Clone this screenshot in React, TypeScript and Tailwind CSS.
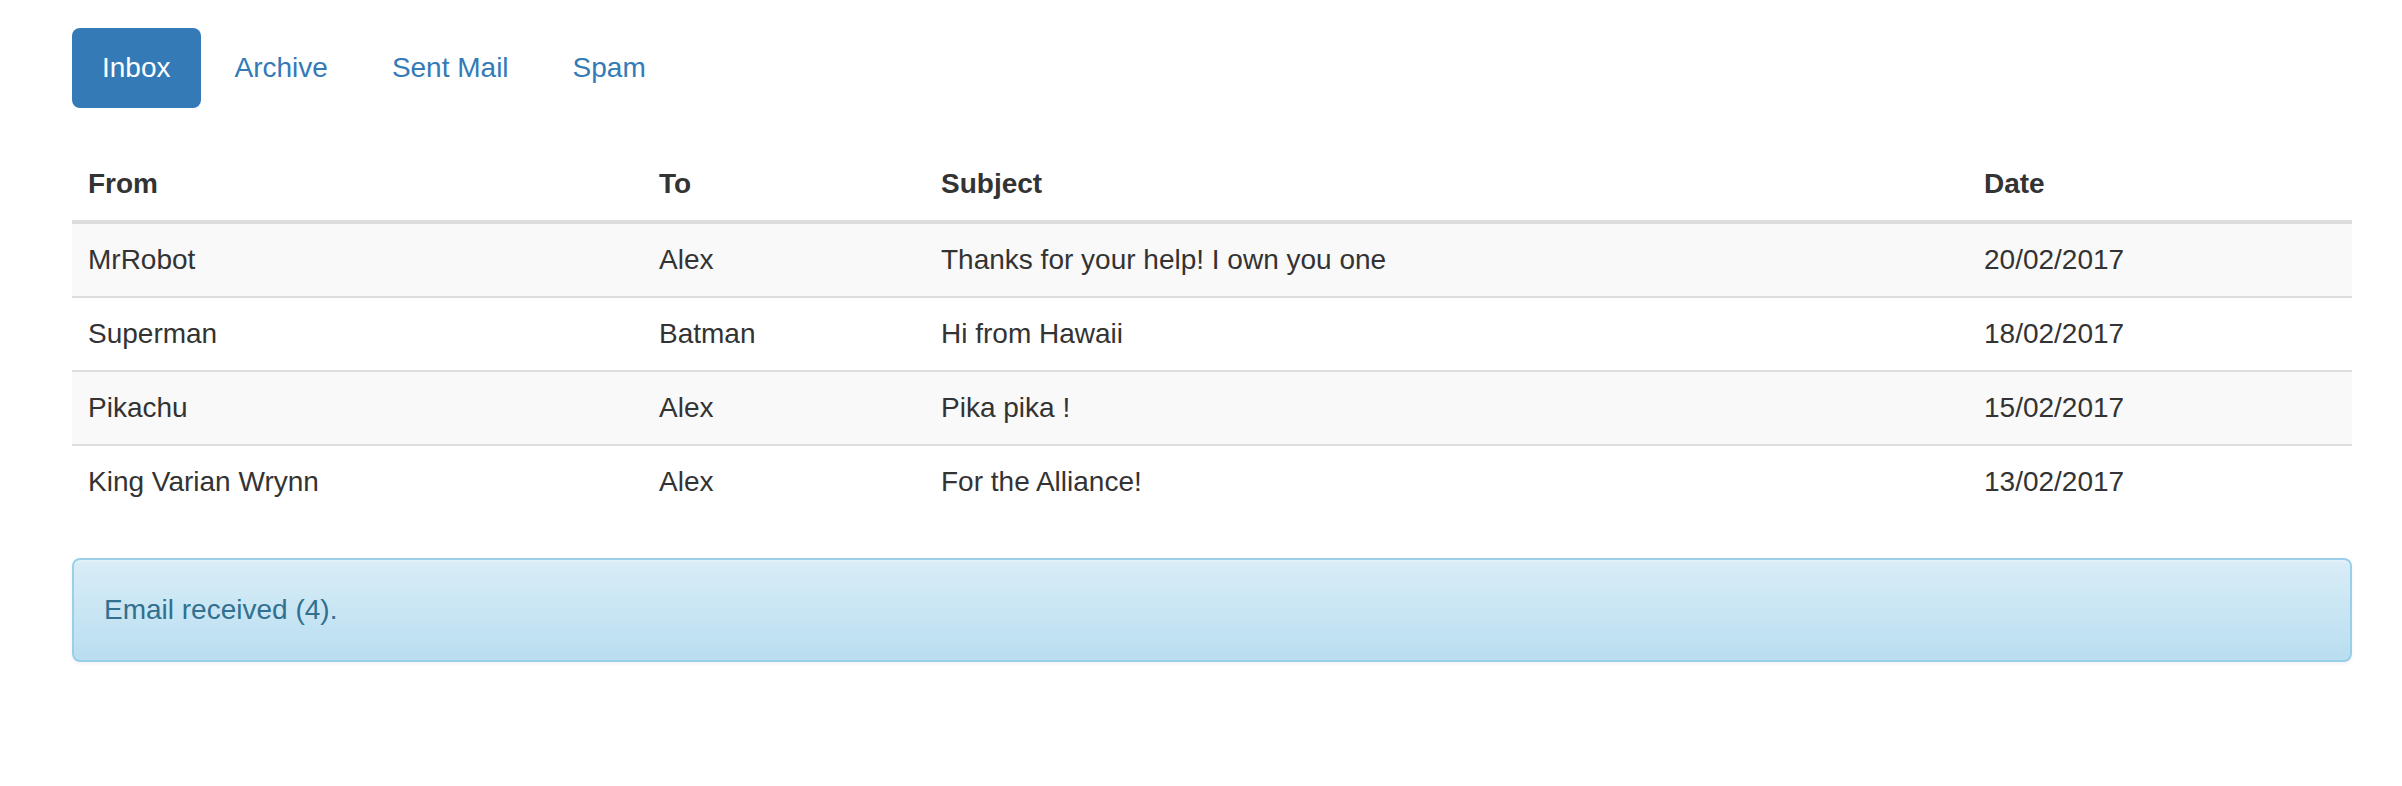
import React from 'react';

interface Email {
  from: string;
  to: string;
  subject: string;
  date: string;
}

const emails: Email[] = [
  { from: 'MrRobot', to: 'Alex', subject: 'Thanks for your help! I own you one', date: '20/02/2017' },
  { from: 'Superman', to: 'Batman', subject: 'Hi from Hawaii', date: '18/02/2017' },
  { from: 'Pikachu', to: 'Alex', subject: 'Pika pika !', date: '15/02/2017' },
  { from: 'King Varian Wrynn', to: 'Alex', subject: 'For the Alliance!', date: '13/02/2017' },
];

const tabs = ['Inbox', 'Archive', 'Sent Mail', 'Spam'];

// Pestañas de navegación (estilo "pills")
const MailTabs: React.FC<{ active: string }> = ({ active }) => (
  <ul className="flex">
    {tabs.map((tab, index) => (
      <li key={tab} className={index > 0 ? 'ml-[4px]' : ''}>
        <a
          href="#"
          className={
            tab === active
              ? 'block rounded-[8px] bg-[#337ab7] px-[30px] py-[20px] text-white'
              : 'block rounded-[8px] px-[30px] py-[20px] text-[#337ab7]'
          }
        >
          {tab}
        </a>
      </li>
    ))}
  </ul>
);

export default function App() {
  return (
    <div className="min-h-screen bg-white pl-[72px] pr-[50px] pt-[28px] font-['Liberation_Sans',Arial,sans-serif] text-[28px] leading-[40px] text-[#333]">
      <MailTabs active="Inbox" />

      {/* Tabla de correos */}
      <table className="mt-[40px] w-full table-fixed">
        <colgroup>
          <col className="w-[571px]" />
          <col className="w-[282px]" />
          <col className="w-[1043px]" />
          <col />
        </colgroup>
        <thead>
          <tr>
            <th className="border-b-[4px] border-[#ddd] p-[16px] text-left font-bold">From</th>
            <th className="border-b-[4px] border-[#ddd] p-[16px] text-left font-bold">To</th>
            <th className="border-b-[4px] border-[#ddd] p-[16px] text-left font-bold">Subject</th>
            <th className="border-b-[4px] border-[#ddd] p-[16px] text-left font-bold">Date</th>
          </tr>
        </thead>
        <tbody>
          {emails.map((email, index) => (
            <tr key={index} className={index % 2 === 0 ? 'bg-[#f9f9f9]' : ''}>
              <td className={index > 0 ? 'border-t-[2px] border-[#ddd] p-[16px]' : 'p-[16px]'}>{email.from}</td>
              <td className={index > 0 ? 'border-t-[2px] border-[#ddd] p-[16px]' : 'p-[16px]'}>{email.to}</td>
              <td className={index > 0 ? 'border-t-[2px] border-[#ddd] p-[16px]' : 'p-[16px]'}>{email.subject}</td>
              <td className={index > 0 ? 'border-t-[2px] border-[#ddd] p-[16px]' : 'p-[16px]'}>{email.date}</td>
            </tr>
          ))}
        </tbody>
      </table>

      {/* Aviso de correos recibidos */}
      <div className="mt-[40px] rounded-[8px] border-[2px] border-[#9acfea] bg-linear-to-b from-[#d9edf7] to-[#b9def0] p-[30px] text-[#31708f] shadow-[inset_0_2px_0_rgba(255,255,255,0.25),0_2px_4px_rgba(0,0,0,0.05)]">
        Email received ({emails.length}).
      </div>
    </div>
  );
}
